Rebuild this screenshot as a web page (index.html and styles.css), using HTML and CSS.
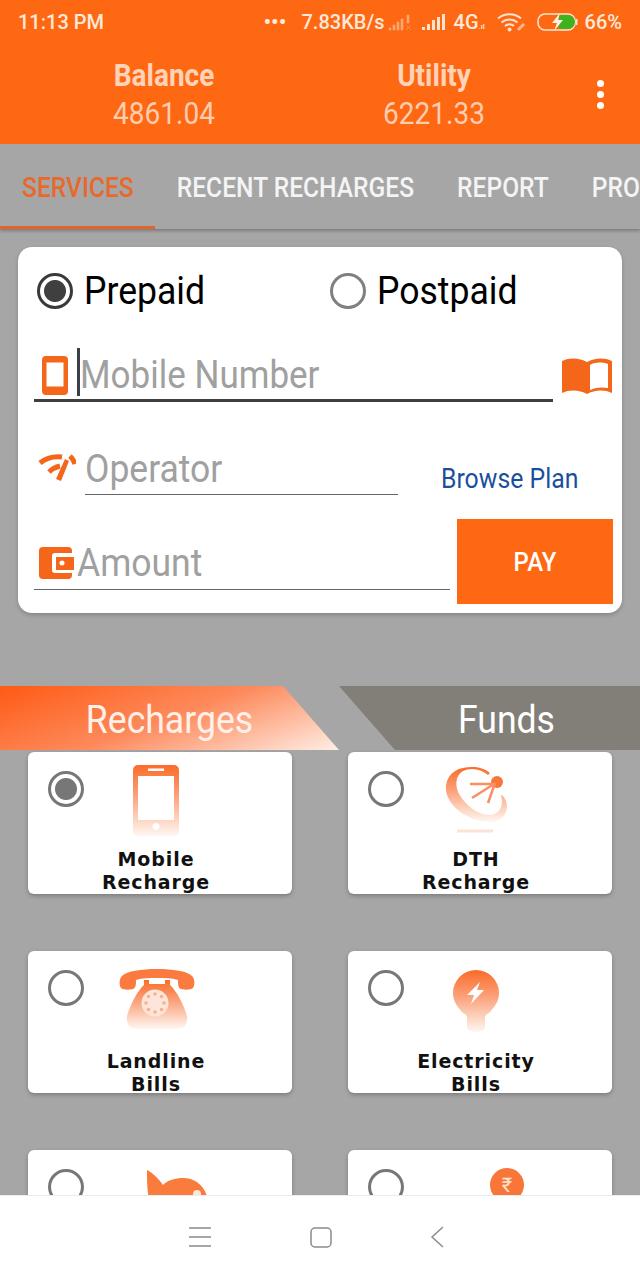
FILE: index.html
```html
<!DOCTYPE html>
<html lang="en">
<head>
  <meta charset="UTF-8">
  <meta name="viewport" content="width=device-width, initial-scale=1.0">
  <title>Recharge</title>
  <link rel="stylesheet" href="styles.css">
</head>
<body>
  <svg class="defs" width="0" height="0">
    <defs>
      <linearGradient id="fade" x1="0" y1="0" x2="0" y2="1">
        <stop offset="0" stop-color="#fb6c28"/>
        <stop offset="0.4" stop-color="#fb9d75"/>
        <stop offset="0.8" stop-color="#fdd9c7"/>
        <stop offset="1" stop-color="#fff7f3"/>
      </linearGradient>
    </defs>
  </svg>

  <div class="app">
    <div class="top">
      <div class="statusbar">
        <span class="time">11:13 PM</span>
        <div class="status-right">
          <span class="dots">•••</span>
          <span class="speed">7.83KB/s</span>
          <svg class="sig-off" width="26" height="18" viewBox="0 0 26 18">
            <path d="M1 15h2v2H1zM5 12h2v5H5zM9 9h2v8H9zM13 6h2v11h-2zM19 2h2v8h-2zM18 12l5 5M23 12l-5 5" fill="#f6a777" stroke="#f6a777" stroke-width=".6"/>
          </svg>
          <svg class="sig" width="26" height="18" viewBox="0 0 26 18">
            <path d="M1 14h3v3H1zM6 11h3v6H6zM11 7h3v10h-3zM16 4h3v13h-3zM21 1h3v16h-3z" fill="#fde3d0"/>
          </svg>
          <span class="net">4G<small>.ıl</small></span>
          <svg class="wifi" width="30" height="20" viewBox="0 0 30 20">
            <path d="M1 6.500a18 18 0 0 1 23 0M4.500 10.500a12.500 12.500 0 0 1 16 0M8 14a7 7 0 0 1 9 0" fill="none" stroke="#fde3d0" stroke-width="2"/>
            <circle cx="12.500" cy="17.500" r="2" fill="#fde3d0"/>
            <path d="M21 18l6-6" stroke="#f6b48c" stroke-width="3"/>
          </svg>
          <svg class="batt" width="42" height="20" viewBox="0 0 42 20">
            <rect x="1" y="2" width="37" height="16" rx="7" fill="none" stroke="#fde3d0" stroke-width="1.600"/>
            <path d="M22 3h9a7 7 0 0 1 0 14h-9z" fill="#3fb21d"/>
            <path d="M39.500 7v6" stroke="#fde3d0" stroke-width="2"/>
            <path d="M23 1l-8 10h5l-3 8 9-11h-5z" fill="#fff3e8"/>
          </svg>
          <span class="pct">66%</span>
        </div>
      </div>
      <div class="wallets">
        <div class="wallet">
          <div class="wallet-name"><span class="tall">Balance</span></div>
          <div class="wallet-amt"><span class="tall">4861.04</span></div>
        </div>
        <div class="wallet">
          <div class="wallet-name"><span class="tall">Utility</span></div>
          <div class="wallet-amt"><span class="tall">6221.33</span></div>
        </div>
        <div class="kebab"><i></i><i></i><i></i></div>
      </div>
    </div>

    <div class="tabs">
      <a class="tab active"><span class="tall">SERVICES</span></a>
      <a class="tab"><span class="tall">RECENT RECHARGES</span></a>
      <a class="tab"><span class="tall">REPORT</span></a>
      <a class="tab"><span class="tall">PROFILE</span></a>
    </div>

    <div class="content">
      <div class="form-card">
        <div class="radio-row">
          <label class="radio-opt prepaid"><span class="radio on"></span><span class="tall">Prepaid</span></label>
          <label class="radio-opt"><span class="radio"></span><span class="tall">Postpaid</span></label>
        </div>

        <div class="mobile-row">
          <div class="field mobile-field">
            <svg class="ico-phone" width="26" height="39" viewBox="0 0 26 39">
              <path fill="#f4671a" fill-rule="evenodd" d="M4 0h18a4 4 0 0 1 4 4v31a4 4 0 0 1-4 4H4a4 4 0 0 1-4-4V4a4 4 0 0 1 4-4zM4.500 6.500v24h17v-24z"/>
            </svg>
            <span class="caret"></span>
            <span class="placeholder tall">Mobile Number</span>
          </div>
          <svg class="ico-book" width="50" height="37" viewBox="0 0 50 37">
            <path fill="#f4671a" fill-rule="evenodd" d="M0 3C8-1 18 0 25 4c7-4 17-5 25-1v32c-8-4-18-3-25 1-7-4-17-5-25-1zM28 7v25c6-3 13-3 18-2V6c-6-2-13-2-18 1z"/>
          </svg>
        </div>

        <div class="operator-row">
          <svg class="ico-op" width="38" height="30" viewBox="0 0 38 30">
            <path d="M2 11C8 6 15 4 24 5" fill="none" stroke="#f4671a" stroke-width="5"/>
            <path d="M11 20c3-3 7-5 11-6" fill="none" stroke="#f4671a" stroke-width="5"/>
            <path d="M27 7l4 2-8 20-5-2z" fill="#f4671a"/>
            <path d="M32 4c2 2 4 5 5 8" fill="none" stroke="#f4671a" stroke-width="5"/>
          </svg>
          <div class="field operator-field"><span class="placeholder tall">Operator</span></div>
          <a class="browse"><span class="tall">Browse Plan</span></a>
        </div>

        <div class="amount-row">
          <div class="field amount-field">
            <svg class="ico-wallet" width="35" height="32" viewBox="0 0 35 32">
              <rect width="33" height="32" rx="4" fill="#f4671a"/>
              <rect x="13" y="6" width="22" height="20" rx="3" fill="#fff"/>
              <rect x="17" y="10" width="18" height="13" fill="#f4671a"/>
              <circle cx="23" cy="16" r="2.500" fill="#fff"/>
            </svg>
            <span class="placeholder tall">Amount</span>
          </div>
          <button class="pay"><span class="tall">PAY</span></button>
        </div>
      </div>

      <div class="switch">
        <div class="switch-tab recharges"><span class="tall">Recharges</span></div>
        <div class="switch-tab funds"><span class="tall">Funds</span></div>
      </div>

      <div class="services">
        <div class="service">
          <div class="service-top">
            <span class="radio small on"></span>
            <svg class="svc-ico" width="46" height="71" viewBox="0 0 46 71">
              <path fill-rule="evenodd" fill="url(#fade)" d="M5 0h36a5 5 0 0 1 5 5v61a5 5 0 0 1-5 5H5a5 5 0 0 1-5-5V5a5 5 0 0 1 5-5zM5 11v44h36V11zM15 3.500v2.500h16V3.500zM23 58a3.500 3.500 0 1 0 .01 0z"/>
            </svg>
          </div>
          <div class="service-name">Mobile<br>Recharge</div>
        </div>
        <div class="service">
          <div class="service-top">
            <span class="radio small"></span>
            <svg class="svc-ico dish-ico" width="63" height="68" viewBox="0 0 63 68">
              <path fill="url(#fade)" d="M18 2C6 4 0 14 1 24c1 14 19 30 41 32 12 1 20-6 20-16 0-4-2-8-5-11l-1 1c2 6 1 14-6 18-12 4-28-6-36-20-4-8-4-18 4-23 8-4 18-2 25 4l2-2C38 1 28 0 18 2z"/>
              <circle cx="52" cy="16" r="6" fill="#f8763a"/>
              <path d="M25 18h24M27 32l22-14M43 37l7-20" stroke="#f98f62" stroke-width="2.500"/>
              <path d="M12 65h36" stroke="#fde3d6" stroke-width="3"/>
            </svg>
          </div>
          <div class="service-name">DTH<br>Recharge</div>
        </div>
        <div class="service">
          <div class="service-top">
            <span class="radio small"></span>
            <svg class="svc-ico phone-ico" width="76" height="60" viewBox="0 0 76 60">
              <path fill="#fb7a3f" d="M38 0c16 0 30 2 35 7 3 3 3 9 1 12-2 2-9 2-12 1-3-1-3-5-3-9-6-2-14-2-21-2s-15 0-21 2c0 4 0 8-3 9-3 1-10 1-12-1C0 16 0 10 3 7 8 2 22 0 38 0z"/>
              <path fill="url(#fade)" d="M25 11h5v4h16v-4h5v5c6 5 14 20 17 31 1 6-2 13-8 13H16c-6 0-9-7-8-13 3-11 11-26 17-31z"/>
              <circle cx="36" cy="34" r="13.500" fill="#fde5d9"/>
              <g fill="#fab08e"><circle cx="36" cy="25" r="1.800"/><circle cx="42.500" cy="27.500" r="1.800"/><circle cx="45" cy="34" r="1.800"/><circle cx="42.500" cy="40.500" r="1.800"/><circle cx="36" cy="43" r="1.800"/><circle cx="29.500" cy="40.500" r="1.800"/><circle cx="27" cy="34" r="1.800"/><circle cx="29.500" cy="27.500" r="1.800"/></g>
            </svg>
          </div>
          <div class="service-name low">Landline<br>Bills</div>
        </div>
        <div class="service">
          <div class="service-top">
            <span class="radio small"></span>
            <svg class="svc-ico bulb-ico" width="46" height="62" viewBox="0 0 46 62">
              <path fill="url(#fade)" fill-rule="evenodd" d="M23 0a23 23 0 0 1 23 23c0 9-5 14-9 19-2 2-5 3-5 5v11c0 2-4 4-9 4s-9-2-9-4V47c0-2-3-3-5-5-4-5-9-10-9-19A23 23 0 0 1 23 0zM27 12L14 25h7l-3 9 13-14h-7z"/>
            </svg>
          </div>
          <div class="service-name low">Electricity<br>Bills</div>
        </div>
        <div class="service">
          <div class="service-top">
            <span class="radio small"></span>
            <svg class="svc-ico bird-ico" width="60" height="30" viewBox="0 0 60 30">
              <path fill="#fa7c3c" d="M0 0c6 3 12 9 16 15 5-5 12-7 20-7 11 0 20 6 24 18v4H2C0 20 0 10 0 0z"/>
              <circle cx="50" cy="24" r="4" fill="#fde5d9"/>
            </svg>
          </div>
        </div>
        <div class="service">
          <div class="service-top">
            <span class="radio small"></span>
            <svg class="svc-ico coin-ico" width="34" height="34" viewBox="0 0 34 34">
              <circle cx="17" cy="17" r="17" fill="#f8763a"/>
              <text x="17" y="24" class="rupee">₹</text>
            </svg>
          </div>
        </div>
      </div>
    </div>

    <div class="navbar">
      <svg width="22" height="20" viewBox="0 0 22 20"><path d="M0 1h22M0 10h22M0 19h22" stroke="#8b8b8b" stroke-width="1.500"/></svg>
      <svg width="22" height="21" viewBox="0 0 22 21"><rect x="1" y="1" width="20" height="19" rx="4" fill="none" stroke="#8b8b8b" stroke-width="1.500"/></svg>
      <svg width="14" height="22" viewBox="0 0 14 22"><path d="M13 1L2 11l11 10" fill="none" stroke="#8b8b8b" stroke-width="1.500"/></svg>
    </div>
  </div>
</body>
</html>
```

FILE: styles.css
```css
* {
  box-sizing: border-box;
}

body {
  margin: 0;
  font-family: 'Roboto', sans-serif;
  background: #a6a6a6;
}

.defs {
  position: absolute;
}

/* the screenshot's type is a bit taller than Roboto */
.tall {
  display: inline-block;
  transform: scaleY(1.1);
}

.app {
  width: 640px;
  height: 1280px;
  display: flex;
  flex-direction: column;
  overflow: hidden;
}

/* orange header */
.top {
  height: 144px;
  flex: none;
  background: #ff6813;
}

.statusbar {
  height: 44px;
  padding: 0 18px;
  display: flex;
  justify-content: space-between;
  align-items: center;
  color: #fde8da;
  font-size: 20px;
  font-weight: 500;
}

.status-right {
  display: flex;
  align-items: center;
}

.dots {
  font-size: 22px;
  margin-right: 15px;
}

.speed {
  margin-right: 3px;
}

.sig-off {
  margin-right: 7px;
}

.sig {
  margin-right: 7px;
}

.net {
  width: 31px;
  white-space: nowrap;
}

.net small {
  font-size: 8px;
}

.wifi {
  margin: 0 10px 0 12px;
}

.batt {
  margin-right: 6px;
}

.wallets {
  display: flex;
  padding-left: 29px;
  position: relative;
  padding-top: 15px;
}

.wallet {
  width: 270px;
  text-align: center;
}

.wallet-name {
  font-size: 28px;
  font-weight: 700;
  line-height: 34px;
  color: #ffd3b8;
}

.wallet-amt {
  margin-top: 3px;
  font-size: 28px;
  line-height: 36px;
  color: #fdcdb0;
}

.kebab {
  margin-left: 28px;
  margin-top: 21px;
  display: flex;
  flex-direction: column;
  gap: 4px;
}

.kebab i {
  width: 7px;
  height: 7px;
  border-radius: 50%;
  background: #fff;
}

/* tab strip */
.tabs {
  height: 85px;
  flex: none;
  display: flex;
  background: #a6a6a6;
  box-shadow: 0 2px 3px rgba(0, 0, 0, 0.25);
  position: relative;
  overflow: hidden;
}

.tab {
  flex: none;
  padding: 0 21.500px;
  line-height: 88px;
  font-size: 24.600px;
  font-weight: 500;
  color: #f4f4f4;
}

.tab.active {
  padding-left: 22px;
  color: #e8692c;
  border-bottom: 3px solid #e0652a;
}

.content {
  flex: 1;
  overflow: hidden;
  padding-top: 18px;
}

/* recharge form */
.form-card {
  width: 604px;
  height: 366px;
  margin-left: 18px;
  padding: 0 9px 0 16px;
  background: #fff;
  border-radius: 14px;
  box-shadow: 0 2px 4px rgba(0, 0, 0, 0.2);
  color: #000;
}

.radio-row {
  display: flex;
  padding: 22px 0 0 3px;
  height: 86px;
}

.radio-opt {
  display: flex;
  align-items: center;
  height: 44px;
  font-size: 35.600px;
}

.prepaid {
  width: 293px;
}

.radio {
  flex: none;
  width: 36px;
  height: 36px;
  margin-right: 11px;
  border-radius: 50%;
  border: 3px solid #808080;
  background: #fff;
}

.radio.on {
  border-color: #3a3a3a;
  background: radial-gradient(circle, #3f3f3f 0 10.500px, #fff 11.500px);
}

.radio.small {
  margin: 0;
  border-color: #777;
}

.radio.small.on {
  background: radial-gradient(circle, #777 0 10.500px, #fff 11.500px);
}

.field {
  display: flex;
  align-items: center;
  font-size: 35.500px;
  border-bottom: 1.500px solid #666;
}

.placeholder {
  color: #a0a0a0;
}

.mobile-row {
  display: flex;
  align-items: flex-start;
}

.mobile-field {
  width: 519px;
  height: 69px;
  padding: 18px 0 0 8px;
  font-size: 35px;
  border-bottom: 3px solid #3f3f3f;
}

.caret {
  flex: none;
  width: 3px;
  height: 48px;
  margin: 0 0 6px 9px;
  background: #3a3f4a;
}

.ico-book {
  margin: 25px 0 0 9px;
}

.operator-row {
  display: flex;
  align-items: flex-start;
  margin-top: 48px;
  height: 68px;
}

.ico-op {
  margin: 2px 9px 0 4px;
}

.operator-field {
  width: 313px;
  height: 45px;
  padding-bottom: 6px;
}

.browse {
  margin: 14px 0 0 43px;
  font-size: 24.800px;
  color: #1b4f9c;
}

.amount-row {
  display: flex;
  align-items: flex-start;
  margin-top: 1px;
}

.amount-field {
  width: 416px;
  height: 71px;
  padding: 18px 0 0 5px;
}

.ico-wallet {
  margin-right: 3px;
}

.pay {
  width: 156px;
  height: 85px;
  margin-left: 7px;
  padding: 0;
  border: 0;
  background: #ff6813;
  color: #fff;
  font-family: 'Roboto', sans-serif;
  font-size: 24px;
  font-weight: 500;
}

/* recharges / funds switch */
.switch {
  height: 64px;
  margin-top: 73px;
  position: relative;
  color: #fff;
  font-size: 35.600px;
  font-weight: 400;
  text-align: center;
}

.switch-tab {
  position: absolute;
  top: 0;
  height: 64px;
  line-height: 68px;
}

.recharges {
  left: 0;
  width: 339px;
  color: #fff1e9;
  background: linear-gradient(160deg, #ff5a14 0%, #fd8a5c 50%, #ffeee6 100%);
  clip-path: polygon(0 0, 283px 0, 100% 100%, 0 100%);
}

.funds {
  left: 339px;
  width: 301px;
  padding-left: 34px;
  background: #827f78;
  clip-path: polygon(0 0, 100% 0, 100% 100%, 56px 100%);
}

/* service grid */
.services {
  display: grid;
  grid-template-columns: 264px 264px;
  grid-auto-rows: 142px;
  column-gap: 56px;
  row-gap: 57px;
  margin: 2px 0 0 28px;
}

.service {
  background: #fff;
  border-radius: 6px;
  box-shadow: 0 2px 4px rgba(0, 0, 0, 0.25);
  overflow: hidden;
}

.service-top {
  height: 90px;
  padding: 19px 0 0 20px;
  display: flex;
  align-items: flex-start;
  position: relative;
}

.svc-ico {
  position: absolute;
  top: 13px;
  left: 105px;
}

.dish-ico {
  top: 14px;
  left: 97px;
}

.phone-ico {
  top: 18px;
  left: 91px;
}

.bulb-ico {
  top: 19px;
}

.bird-ico {
  top: 20px;
  left: 119px;
}

.coin-ico {
  top: 18px;
  left: 142px;
}

.rupee {
  font-size: 20px;
  fill: #ffe2d0;
  text-anchor: middle;
}

.service-name {
  width: 256px;
  margin-top: 6px;
  text-align: center;
  font-family: 'DejaVu Sans', sans-serif;
  font-size: 19px;
  font-weight: 700;
  letter-spacing: 0.900px;
  line-height: 23px;
  color: #111;
}

.service-name.low {
  margin-top: 9px;
}

/* system nav */
.navbar {
  height: 85px;
  flex: none;
  background: #fff;
  border-top: 1px solid #ececec;
  display: flex;
  align-items: center;
  padding: 0 196px 2px 189px;
  justify-content: space-between;
}
```
